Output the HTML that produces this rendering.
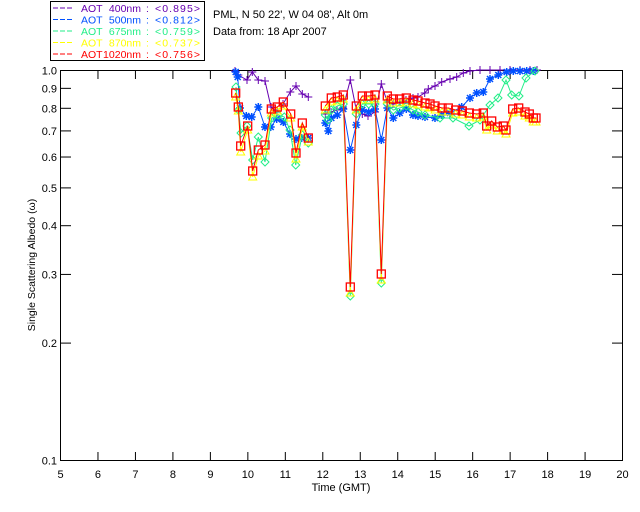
<!DOCTYPE html>
<html><head><meta charset="utf-8"><style>
html,body{margin:0;padding:0;background:#fff;width:640px;height:512px;overflow:hidden}
svg{display:block}
text{font-family:"Liberation Sans",sans-serif}
</style></head><body>
<svg id="s" width="640" height="512" xmlns="http://www.w3.org/2000/svg" font-size="11">
<rect x="50.5" y="1.5" width="154" height="59" fill="none" stroke="#000" stroke-width="1"/>
<g id="leg" font-size="10.5"></g>
<text x="213" y="18" fill="#000" font-size="11">PML, N 50 22', W 04 08', Alt 0m</text>
<text x="213" y="35" fill="#000" font-size="11">Data from: 18 Apr 2007</text>
<rect x="60.5" y="70.5" width="562" height="390" fill="none" stroke="#000"/>
<g id="ax" stroke="#000"></g>
<g id="lab" font-size="11" fill="#000"></g>
<text x="341" y="491" text-anchor="middle" font-size="11">Time (GMT)</text>
<text transform="translate(35,265) rotate(-90)" text-anchor="middle" font-size="10.5">Single Scattering Albedo (ω)</text>
<g id="d" fill="none" stroke-width="1"></g>
</svg>
<script>
var NS="http://www.w3.org/2000/svg";
function el(p,t,a,txt){var e=document.createElementNS(NS,t);for(var k in a)e.setAttribute(k,a[k]);if(txt!=null)e.textContent=txt;p.appendChild(e);return e;}
var leg=document.getElementById('leg');
[['#6600b0','400nm','0.895'],['#0050ff','500nm','0.812'],['#22ee88','675nm','0.759'],['#ffff00','870nm','0.737'],['#ff0000','1020nm','0.756']].forEach(function(r,i){
 var y=12+i*11.5;
 el(leg,'line',{x1:53,y1:y-4,x2:72,y2:y-4,stroke:r[0],'stroke-dasharray':'5,2'});
 el(leg,'text',{x:81,y:y,fill:r[0]},'AOT');
 el(leg,'text',{x:141,y:y,fill:r[0],'text-anchor':'end'},r[1]);
 el(leg,'text',{x:146,y:y,fill:r[0]},':');
 el(leg,'text',{x:155,y:y,fill:r[0],textLength:45},'<'+r[2]+'>');
});
var ax=document.getElementById('ax'),lab=document.getElementById('lab');
for(var h=5;h<=20;h++){var x=60.5+(h-5)*37.47;
 if(h>5&&h<20){el(ax,'line',{x1:x,y1:460,x2:x,y2:452});el(ax,'line',{x1:x,y1:71,x2:x,y2:79});}
 el(lab,'text',{x:x,y:478,'text-anchor':'middle'},String(h));}
[1,.9,.8,.7,.6,.5,.4,.3,.2,.1].forEach(function(v){var y=70.5-Math.log10(v)*390;
 if(v<1&&v>0.1){el(ax,'line',{x1:60,y1:y,x2:71,y2:y});el(ax,'line',{x1:622,y1:y,x2:612,y2:y});}
 el(lab,'text',{x:57,y:y+4,'text-anchor':'end'},v.toFixed(1));});
var d=document.getElementById('d');
var red=[[[235.7,93],[238.3,107],[240.7,146],[247.7,126],[252.7,171],[258.3,150],[265,145],[271.3,109],[277.3,107],[283.3,102],[290.7,114],[296,153],[302.3,123],[308.3,138]],
[[325.3,106],[331.3,98],[337.3,97],[343.3,95],[350.3,287],[356.3,106],[362.3,96],[368.7,96],[375,95],[381.3,274],[387.3,96],[393.3,99],[399.7,99],[406.3,98],[413,100],[418,101],[425,103],[430,104],[435,106],[442,108],[448.3,108],[455.7,110],[462.3,111],[469.3,113],[476.7,114],[483.3,113],[486.7,126],[491.7,121],[497.3,127],[503.3,126],[506,130],[512.7,109],[518.7,108],[525,112],[529.3,114],[533.3,118],[536,118]]];
function off(s,dy,ddip){return s.map(function(seg){return seg.map(function(p){return [p[0],p[1]+(p[1]>140?ddip:dy)];});});}
var yel=off(red,4,6);
var grn=[[[236,87],[238.5,110],[241,133],[247,126],[252.7,160],[258.3,137],[265,162],[271.7,118],[278.3,115],[284.3,117],[290,130],[295.7,165],[302.3,135],[308.3,143]],
[[325.3,115],[328,120],[331.3,110],[337.3,106],[343.3,104],[350.3,296],[356.3,114],[362.3,104],[368.7,104],[375,104],[381.3,283],[387.3,104],[393.3,110],[399.7,108],[406.3,106],[413,110],[418,112],[425,115],[440,118],[453,118],[469,126],[480,120],[490,105],[498,98],[506,80],[511.7,95],[519,96],[526,78],[535,71]]];
var blu=[[[235.7,72],[237.7,77],[240,108],[246.3,116],[251.7,117],[258.3,107],[265,127],[270.7,127],[276.7,119],[283.3,122],[290,134],[296,139],[301.7,138],[308.3,138]],
[[325.3,123],[328.3,131],[331.3,118],[337.3,115],[343.3,109],[350.3,150],[356.3,125],[362.3,110],[368.7,112],[375,109],[381.3,140],[387.3,108],[393.3,118],[399.7,113],[406.3,109],[413,115],[418,116],[425,117],[435,118],[441.7,115],[450,113],[461.7,107],[470,98],[476.7,93],[483.3,92],[490,79],[498.3,75],[506.7,72],[513.3,71],[520,71],[526.7,71],[533.3,71]]];
var pur=[[[235,71],[238.3,75],[247,80],[252.3,72],[258.3,80],[265,81],[271,107],[277,112],[283,104],[290.3,92],[296,86],[302.3,94],[308.3,97]],
[[325.3,114],[331,112],[337,110],[343,108],[350.3,80],[356.3,110],[362.3,114],[368,116],[375,112],[381.3,84],[387.3,102],[393,104],[400,102],[406,100],[413,98],[418,97],[424.7,93],[428.3,89],[435,86],[441.7,82],[450,79],[456.7,77],[463.3,73],[470,71],[480,70],[490,70],[500,70],[510,70],[520,70],[530,70],[537,70]]];
function mk(t,x,y,c){
 if(t=='+'){el(d,'path',{d:'M'+(x-4)+' '+y+'h8M'+x+' '+(y-4)+'v8',stroke:c});}
 else if(t=='*'){el(d,'path',{d:'M'+(x-4)+' '+y+'h8M'+x+' '+(y-4)+'v8M'+(x-3)+' '+(y-3)+'l6 6M'+(x-3)+' '+(y+3)+'l6 -6',stroke:c,'stroke-width':1.5});}
 else if(t=='d'){el(d,'path',{d:'M'+x+' '+(y-4)+'l4 4l-4 4l-4 -4z',stroke:c});}
 else if(t=='t'){el(d,'path',{d:'M'+x+' '+(y-4)+'l4 7h-8z',stroke:c});}
 else if(t=='s'){el(d,'rect',{x:x-4,y:y-4,width:8,height:8,stroke:c,'stroke-width':1.3});}
}
function series(s,c,t){s.forEach(function(seg){el(d,'polyline',{points:seg.map(function(p){return p.join(',')}).join(' '),stroke:c});seg.forEach(function(p){mk(t,p[0],p[1],c);});});}
series(pur,'#6600b0','+');
series(blu,'#0050ff','*');
series(grn,'#22ee88','d');
series(yel,'#ffff00','t');
series(red,'#ff0000','s');
</script>
</body></html>
